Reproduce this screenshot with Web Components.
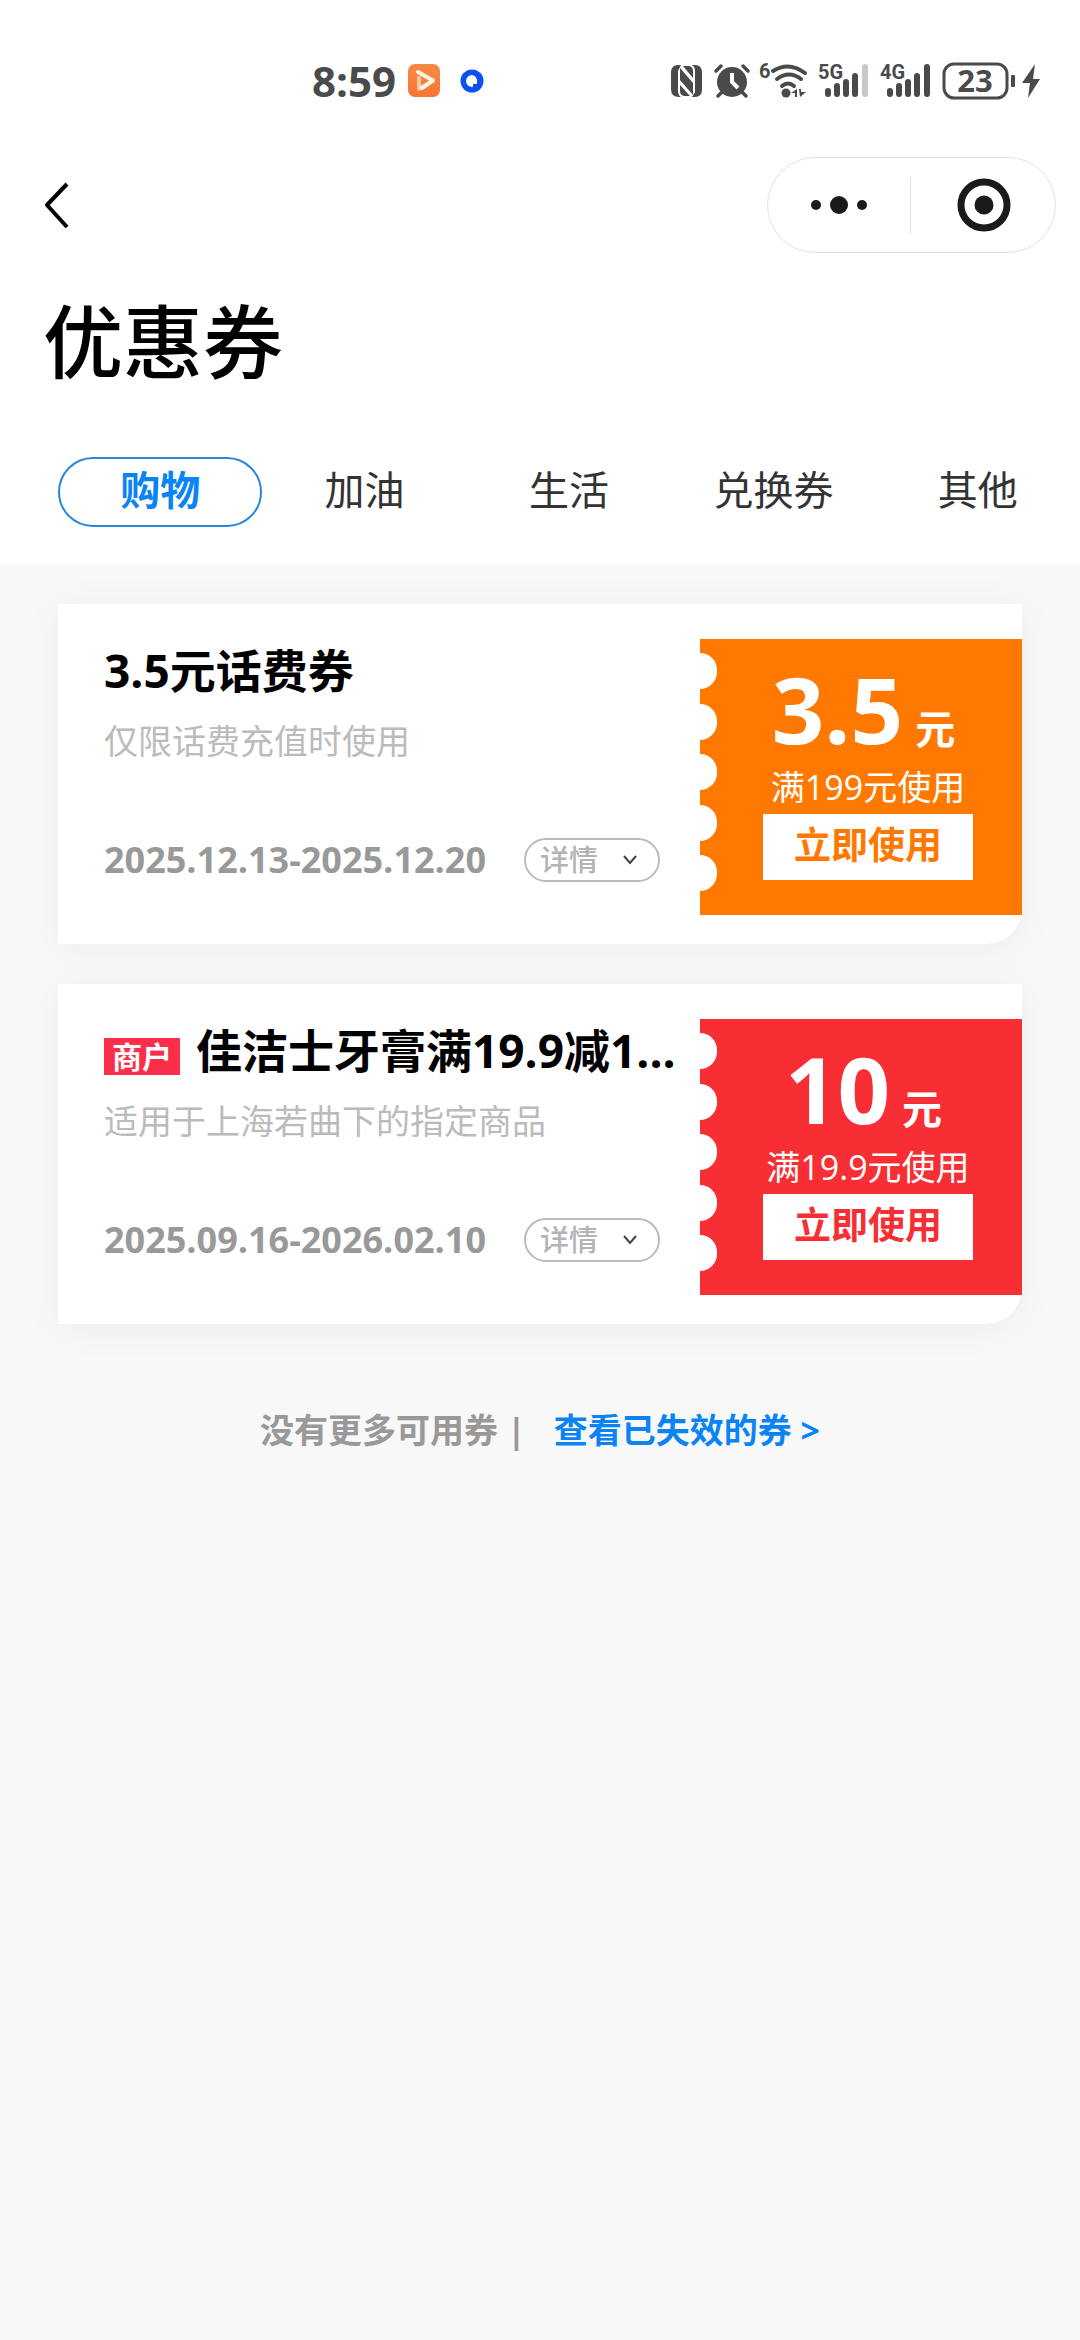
<!DOCTYPE html>
<html lang="zh-CN">
<head>
<meta charset="utf-8">
<meta name="viewport" content="width=device-width, initial-scale=1">
<title>优惠券</title>
<style>
  body {
    margin: 0;
    min-height: 100vh;
    background: #f8f8f8;
    color: #000;
    font-family: "Open Sans", "Noto Sans CJK SC", sans-serif;
  }
</style>
</head>
<body>
<coupon-page>
  <status-bar slot="top"></status-bar>
  <nav-bar slot="top"></nav-bar>
  <page-title slot="top">优惠券</page-title>
  <tab-bar slot="top">
    <tab-item selected>购物</tab-item>
    <tab-item>加油</tab-item>
    <tab-item>生活</tab-item>
    <tab-item>兑换券</tab-item>
    <tab-item>其他</tab-item>
  </tab-bar>

  <coupon-card tone="orange">
    <span slot="name">3.5元话费券</span>
    <span slot="scope">仅限话费充值时使用</span>
    <span slot="dates">2025.12.13-2025.12.20</span>
    <span slot="amount">3.5</span>
    <span slot="rule">满199元使用</span>
  </coupon-card>
  <coupon-card tone="red">
    <coupon-tag slot="tag">商户</coupon-tag>
    <span slot="name">佳洁士牙膏满19.9减1...</span>
    <span slot="scope">适用于上海若曲下的指定商品</span>
    <span slot="dates">2025.09.16-2026.02.10</span>
    <span slot="amount">10</span>
    <span slot="rule">满19.9元使用</span>
  </coupon-card>
  <list-end>没有更多可用券 |<span slot="link">查看已失效的券 &gt;</span></list-end>
</coupon-page>

<script>
  const define = (name, html) => {
    const template = document.createElement('template');
    template.innerHTML = html;
    customElements.define(name, class extends HTMLElement {
      constructor() {
        super();
        this.attachShadow({ mode: 'open' }).append(template.content.cloneNode(true));
      }
    });
  };

  define('coupon-page', `
    <style>
      :host { display: block; }
      header { background: #fff; padding-bottom: 37px; }
      main { display: flex; flex-direction: column; gap: 40px; padding: 40px 58px; }
    </style>
    <header><slot name="top"></slot></header>
    <main><slot></slot></main>`);

  define('status-bar', `
    <style>
      :host {
        display: flex; align-items: center; justify-content: space-between;
        height: 48px; padding: 57px 40px 52px 312px; color: #4a4a4a;
      }
      div { display: flex; align-items: center; }
      .left { gap: 12px; }
      .right { gap: 10px; }
      time { font-size: 42px; line-height: 48px; font-weight: 700; }
      svg { display: block; fill: currentColor; overflow: visible; }
      .line { fill: none; stroke: currentColor; stroke-linecap: round; stroke-linejoin: round; }
      text { font-weight: 700; font-family: "Liberation Sans Narrow", Roboto, sans-serif; font-size: 20px; }
      .level { font-family: "Open Sans", sans-serif; font-size: 31px; }
    </style>
    <div class="left">
      <time>8:59</time>
      <svg width="32" height="34" viewBox="0 0 32 34">
        <defs><linearGradient id="g" x1="0" y1="0" x2="0" y2="1"><stop offset="0" stop-color="#f68a45"/><stop offset="1" stop-color="#fb7433"/></linearGradient></defs>
        <rect width="32" height="33" rx="7" fill="url(#g)"/>
        <path d="M11 14 V25 L18 21" fill="none" stroke="#ffc9a0" stroke-width="4" stroke-linecap="round" stroke-linejoin="round"/>
        <path d="M10 8 L25 16.500 L14 24" fill="none" stroke="#fff3e6" stroke-width="4" stroke-linecap="round" stroke-linejoin="round"/>
      </svg>
      <svg width="40" height="34" viewBox="0 0 40 34">
        <circle cx="20" cy="17" r="11.500" fill="#0d50f0"/>
        <path d="M20 11 a6 6 0 1 0 0 12 h1 v-3 h4 v-2 a6 6 0 0 0 -5 -7z" fill="#fff"/>
      </svg>
    </div>
    <div class="right">
      <svg width="33" height="34" viewBox="0 0 33 34">
        <path d="M7 1 h3 L7 7 V27 Q7 31 10 33 H8 Q0 33 0 25 V9 Q0 1 7 1z"/>
        <path d="M24 1 Q31 1 31 9 V25 Q31 33 24 33 h-3 L24 28 V7 Q24 3 21 1z"/>
        <path d="M9 4 L22 19 V31 L9 16z M9 21 L19 32 H13 Q9 31 9 27z M22 14 L12 2 H18 Q22 3 22 7z"/>
      </svg>
      <svg width="36" height="34" viewBox="0 0 36 34">
        <circle cx="18" cy="18" r="15"/>
        <path class="line" stroke-width="3.500" d="M2 7 L7 2 M34 7 L29 2 M8 28 L4 32 M28 28 L32 32"/>
        <path d="M18 9 V18 L24 24" fill="none" stroke="#fff" stroke-width="4"/>
      </svg>
      <svg width="48" height="48" viewBox="0 -7 48 48">
        <text x="-1" y="14">6</text>
        <path class="line" stroke-width="4" d="M13 7 Q29 -3 45 9 M17 15 Q29 6 41 15 M22 22 Q28 17 34 22"/>
        <circle cx="26" cy="29" r="4.500"/>
        <path d="M31 29 L37 25 V33 H35 V29z M39 25 H41 V28 H46 L40 33z"/>
      </svg>
      <svg width="52" height="48" viewBox="0 -7 52 48">
        <text x="0" y="15">5G</text>
        <path class="line" stroke-width="6" d="M10 27 V30 M19 22 V30 M28 18 V30 M37 12 V30"/>
        <path class="line" stroke-width="6" opacity=".3" d="M47 3 V30"/>
      </svg>
      <svg width="52" height="48" viewBox="0 -7 52 48">
        <text x="0" y="15">4G</text>
        <path class="line" stroke-width="6" d="M10 27 V30 M19 22 V30 M28 18 V30 M37 12 V30 M47 3 V30"/>
      </svg>
      <svg width="72" height="48" viewBox="0 -5 72 48">
        <rect x="2" y="2" width="63" height="34" rx="10" class="line" stroke-width="3"/>
        <rect x="69" y="13" width="4" height="12" rx="1"/>
        <text class="level" x="33" y="30" text-anchor="middle">23</text>
      </svg>
      <svg width="16" height="34" viewBox="0 0 16 34"><path d="M11 0 L-2 19 H6 L4 34 L16 15 H9z"/></svg>
    </div>`);

  define('nav-bar', `
    <style>
      :host { display: flex; justify-content: space-between; align-items: center; padding: 0 24px 0 33px; }
      button { display: grid; place-items: center; padding: 0; border: 0; background: none; flex: 1; height: 56px; }
      .back { flex: none; width: 48px; }
      .capsule {
        display: flex; align-items: center; box-sizing: border-box;
        width: 289px; height: 96px; border: 1px solid #e2e2e2; border-radius: 48px;
      }
      .capsule button + button { border-left: 1px solid #e2e2e2; padding-left: 2px; }
      svg { display: block; }
    </style>
    <button class="back" aria-label="返回">
      <svg width="48" height="48" viewBox="0 0 48 48"><path d="M34 3 L14 24 L34 46" fill="none" stroke="#000" stroke-width="4" stroke-linejoin="round"/></svg>
    </button>
    <div class="capsule">
      <button aria-label="更多">
        <svg width="56" height="18" viewBox="0 0 56 18" fill="#1a1a1a"><circle cx="5" cy="9" r="5"/><circle cx="28" cy="9" r="9"/><circle cx="51" cy="9" r="5"/></svg>
      </button>
      <button aria-label="关闭">
        <svg width="54" height="54" viewBox="0 0 54 54"><circle cx="27" cy="27" r="23" fill="none" stroke="#1a1a1a" stroke-width="7"/><circle cx="27" cy="27" r="9.500" fill="#1a1a1a"/></svg>
      </button>
    </div>`);

  define('page-title', `
    <style>
      :host { display: block; padding: 40px 43px 68px; }
      h1 { margin: 0; font-size: 80px; line-height: 96px; font-weight: 500; }
    </style>
    <h1><slot></slot></h1>`);

  define('tab-bar', `
    <style>
      :host { display: block; }
      nav { display: flex; padding-left: 58px; }
    </style>
    <nav role="tablist"><slot></slot></nav>`);

  define('tab-item', `
    <style>
      :host { display: block; flex: 1; }
      button {
        width: 100%; height: 70px; padding: 0 0 4px; box-sizing: border-box;
        border: 2px solid transparent; border-radius: 35px; background: none;
        color: #333; font: inherit; font-size: 40px; line-height: 56px;
      }
      :host([selected]) button { border-color: #2a87e0; color: #0a84f5; font-weight: 700; }
    </style>
    <button role="tab"><slot></slot></button>`);

  define('coupon-tag', `
    <style>
      :host {
        display: block; flex: none; padding: 0 8px; background: #fc2e49; color: #fff;
        font-size: 30px; line-height: 37px; font-weight: 700;
      }
    </style>
    <slot></slot>`);

  define('coupon-card', `
    <style>
      :host {
        --tone: #ff7900;
        display: flex; align-items: flex-start; background: #fff;
        border-radius: 0 0 36px 0; box-shadow: 0 4px 40px rgba(60, 30, 30, .05);
      }
      :host([tone="red"]) { --tone: #f82e35; }
      .info { flex: 1; min-width: 0; padding: 38px 0 62px 46px; }
      h2 {
        display: flex; align-items: center; gap: 16px; margin: 0 0 19px;
        font-size: 46px; line-height: 56px; font-weight: 700; white-space: nowrap;
      }
      ::slotted(coupon-tag) { margin-top: 12px; }
      p { margin: 0; }
      .scope { font-size: 34px; line-height: 48px; color: #bbb; margin-bottom: 73px; }
      .row { display: flex; align-items: center; gap: 38px; }
      .dates { font-size: 36px; line-height: 44px; font-weight: 700; color: #999; }
      .more {
        display: flex; align-items: center; justify-content: space-between; box-sizing: border-box;
        width: 136px; height: 44px; padding: 0 20px 0 14px; border: 2px solid #bbb; border-radius: 22px;
        background: none; color: #b4b4b4; font: inherit; font-size: 29px; line-height: 40px; font-weight: 500;
      }
      .ticket { display: flex; flex: none; width: 322px; height: 276px; margin-top: 35px; background: var(--tone); color: #fff; }
      .notches { display: flex; flex-direction: column; justify-content: space-between; padding: 14px 0 24px; }
      .notches i { width: 17px; height: 36px; background: #fff; border-radius: 0 18px 18px 0; }
      .value { flex: 1; display: flex; flex-direction: column; align-items: center; padding: 24px 3px 0 0; }
      .amount { display: flex; align-items: baseline; gap: 12px; padding-right: 9px; font-size: 92px; line-height: 92px; font-weight: 700; }
      .unit { font-size: 40px; line-height: 40px; }
      .rule { font-size: 34px; line-height: 44px; margin: 10px 0 5px; white-space: nowrap; }
      .use {
        width: 210px; height: 66px; padding: 0 0 4px; border: 0; background: #fff;
        color: var(--tone); font: inherit; font-size: 37px; line-height: 48px; font-weight: 700;
      }
    </style>
    <div class="info">
      <h2><slot name="tag"></slot><slot name="name"></slot></h2>
      <p class="scope"><slot name="scope"></slot></p>
      <div class="row">
        <p class="dates"><slot name="dates"></slot></p>
        <button class="more">详情<svg width="16" height="12" viewBox="0 0 16 12"><path d="M2 2 L8 9 L14 2" fill="none" stroke="#444" stroke-width="2"/></svg></button>
      </div>
    </div>
    <div class="ticket">
      <div class="notches"><i></i><i></i><i></i><i></i><i></i></div>
      <div class="value">
        <p class="amount"><slot name="amount"></slot><span class="unit">元</span></p>
        <p class="rule"><slot name="rule"></slot></p>
        <button class="use">立即使用</button>
      </div>
    </div>`);

  define('list-end', `
    <style>
      :host {
        display: flex; justify-content: center; gap: 28px; margin-top: 41px;
        font-size: 34px; line-height: 50px; font-weight: 700; color: #999;
      }
      a { color: #0a84f5; text-decoration: none; }
    </style>
    <span><slot></slot></span><a href="#"><slot name="link"></slot></a>`);
</script>
</body>
</html>
